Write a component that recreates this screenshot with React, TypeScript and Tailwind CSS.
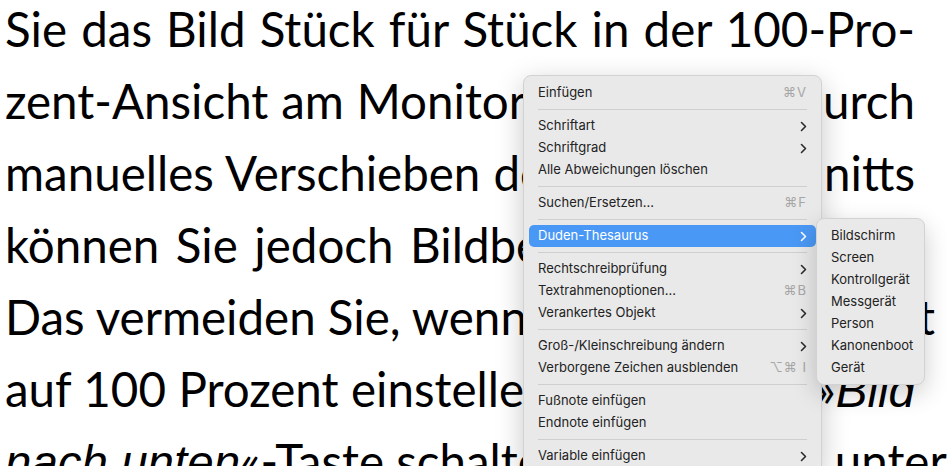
import React from 'react';

type Item =
  | { type: 'sep' }
  | { type: 'item'; label: string; shortcut?: string; submenu?: boolean; active?: boolean };

const menuItems: Item[] = [
  { type: 'item', label: 'Einfügen', shortcut: '⌘V' },
  { type: 'sep' },
  { type: 'item', label: 'Schriftart', submenu: true },
  { type: 'item', label: 'Schriftgrad', submenu: true },
  { type: 'item', label: 'Alle Abweichungen löschen' },
  { type: 'sep' },
  { type: 'item', label: 'Suchen/Ersetzen...', shortcut: '⌘F' },
  { type: 'sep' },
  { type: 'item', label: 'Duden-Thesaurus', submenu: true, active: true },
  { type: 'sep' },
  { type: 'item', label: 'Rechtschreibprüfung', submenu: true },
  { type: 'item', label: 'Textrahmenoptionen...', shortcut: '⌘B' },
  { type: 'item', label: 'Verankertes Objekt', submenu: true },
  { type: 'sep' },
  { type: 'item', label: 'Groß-/Kleinschreibung ändern', submenu: true },
  { type: 'item', label: 'Verborgene Zeichen ausblenden', shortcut: '⌥⌘ I' },
  { type: 'sep' },
  { type: 'item', label: 'Fußnote einfügen' },
  { type: 'item', label: 'Endnote einfügen' },
  { type: 'sep' },
  { type: 'item', label: 'Variable einfügen', submenu: true },
];

const synonyms = ['Bildschirm', 'Screen', 'Kontrollgerät', 'Messgerät', 'Person', 'Kanonenboot', 'Gerät'];

const Chevron: React.FC<{ white?: boolean }> = ({ white }) => (
  <svg width="7" height="11" viewBox="0 0 7 11" fill="none" className="shrink-0">
    <path
      d="M1.5 1.5 L5.5 5.5 L1.5 9.5"
      stroke={white ? '#ffffff' : '#2a2a2a'}
      strokeWidth="1.6"
      strokeLinecap="round"
      strokeLinejoin="round"
    />
  </svg>
);

// justified lines of the document behind the menu
const lineCls = 'h-[72px] w-[910px] whitespace-nowrap text-justify [text-align-last:justify]';
const ital = "italic font-['Liberation_Sans',Arial,sans-serif]";

const App: React.FC = () => {
  return (
    <div className="relative w-[947px] h-[466px] overflow-hidden bg-white">
      <div className="pl-[5px] -mt-[7px] text-black text-[47.5px] leading-[72px] font-['Lato','Noto_Sans',sans-serif]">
        <div className={lineCls}>Sie das Bild Stück für Stück in der 100-Pro-</div>
        <div className={lineCls}>zent-Ansicht am Monitor prüfen oder durch</div>
        <div className={lineCls}>manuelles Verschieben des Bild-Ausschnitts</div>
        <div className={lineCls}>können Sie jedoch Bildbereiche übersehen.</div>
        <div className="h-[72px] w-[925px] whitespace-nowrap text-justify [text-align-last:justify]">
          Das vermeiden Sie, wenn Sie nun die Ansicht
        </div>
        <div className={lineCls}>
          auf 100 Prozent einstellen und mit der »<span className={ital}>Bild</span>
        </div>
        <div className="h-[72px] w-[932px] whitespace-nowrap text-justify [text-align-last:justify]">
          <span className={ital}>nach unten</span>«-Taste schalten und danach unter
        </div>
      </div>

      {/* context menu */}
      <div className="absolute left-[523px] top-[75px] w-[299px] pt-[6px] pb-[6px] rounded-[8px] bg-[#e9e9e9] border border-[#d2d2d2] shadow-[0_8px_28px_rgba(0,0,0,0.22)] font-['Inter','Liberation_Sans',sans-serif] text-[13px] text-[#222222]">
        {menuItems.map((it, i) =>
          it.type === 'sep' ? (
            <div key={i} className="h-[11px] flex items-center mx-[14px]">
              <div className="h-px w-full bg-[#cfcfcf]" />
            </div>
          ) : (
            <div
              key={i}
              className={
                it.active
                  ? 'h-[22px] mx-[5px] pl-[9px] pr-[9px] rounded-[5px] flex items-center justify-between bg-[#4a98f5] text-white'
                  : 'h-[22px] mx-[5px] pl-[9px] pr-[9px] rounded-[5px] flex items-center justify-between'
              }
            >
              <span>{it.label}</span>
              {it.submenu && <Chevron white={it.active} />}
              {it.shortcut && <span className="text-[#a6a6a6] tracking-[1px]">{it.shortcut}</span>}
            </div>
          )
        )}
      </div>

      {/* thesaurus submenu */}
      <div className="absolute left-[816px] top-[218px] w-[109px] pt-[6px] pb-[5px] rounded-[8px] bg-[#e9e9e9] border border-[#d2d2d2] shadow-[0_8px_24px_rgba(0,0,0,0.2)] font-['Inter','Liberation_Sans',sans-serif] text-[13px] text-[#222222]">
        {synonyms.map((s) => (
          <div key={s} className="h-[22px] mx-[5px] pl-[9px] flex items-center">
            {s}
          </div>
        ))}
      </div>
    </div>
  );
};

export default App;
